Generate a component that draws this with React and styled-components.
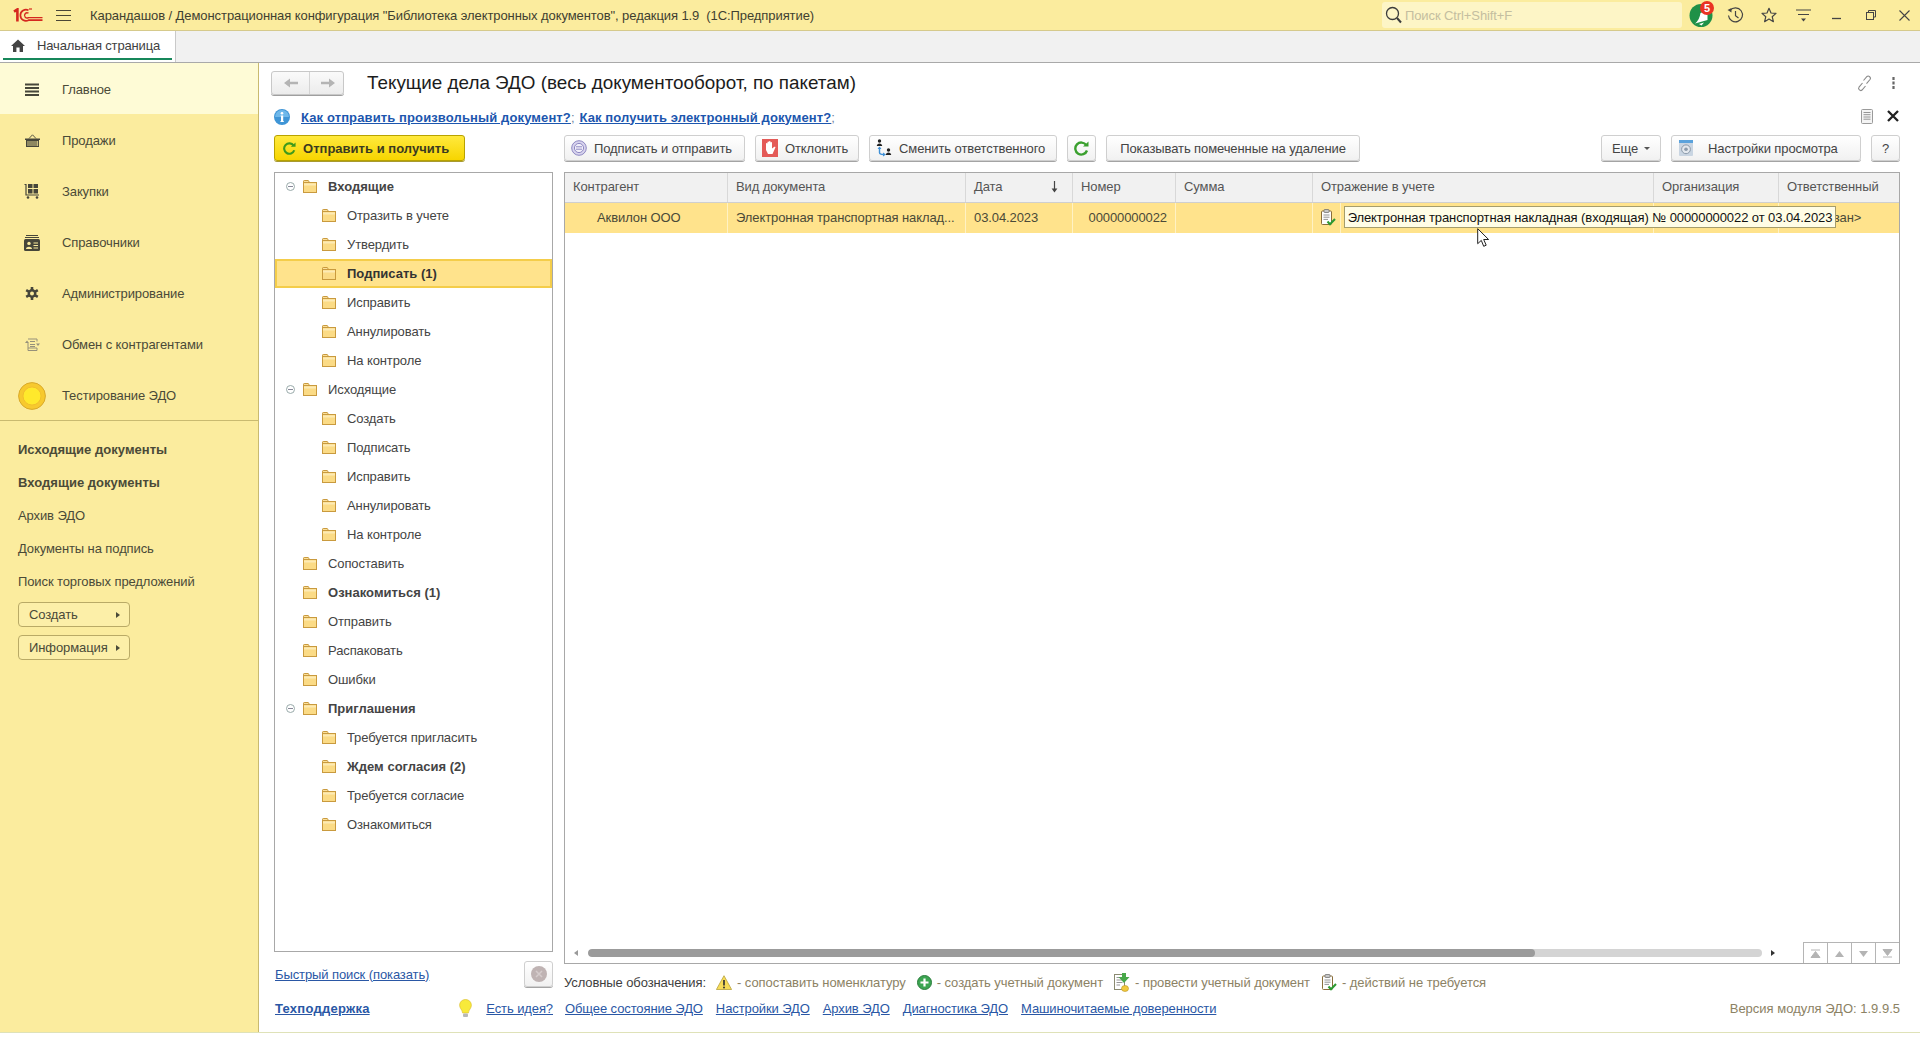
import React from "react";
import styled, { createGlobalStyle, css } from "styled-components";

const Global = createGlobalStyle`
  html, body { margin: 0; padding: 0; background: #fff; }
  body { font-family: "Liberation Sans", Arial, sans-serif; font-size: 13px; letter-spacing: -0.1px; color: #4b4b3c; overflow: hidden; }
  * { box-sizing: border-box; }
`;

const Page = styled.div`width: 1920px; height: 1063px; display: flex; flex-direction: column; background: #fff;`;

/* ---------- title bar ---------- */
const TitleBar = styled.header`
  height: 31px; flex: none; display: flex; align-items: center; background: #fbec9e;
  border-bottom: 1px solid #d6ca8c;
`;
const LogoSlot = styled.div`width: 43px; padding-left: 13px; display: flex; flex: none;`;
const BurgerSlot = styled.div`width: 47px; padding-left: 13px; display: flex; flex: none;`;
const TitleText = styled.div`font-size: 13px; color: #3f3f30; white-space: pre; flex: 1; padding-top: 1px; letter-spacing: -0.08px;`;
const SearchBox = styled.div`
  width: 300px; height: 26px; flex: none; background: #fdf5c6; border-radius: 3px;
  display: flex; align-items: center; gap: 3px; padding-left: 3px; color: #c4bea0; font-size: 13px;
`;
const TitleIcons = styled.div`display: grid; grid-template-columns: 7px 29px 34px 34px 34px 34px 34px 32px; width: 238px; align-items: center; justify-items: center; flex: none;`;
const BellSlot = styled.div`position: relative; grid-column: 2; justify-self: start; width: 24px; height: 24px;`;
const BellBadge = styled.span`
  position: absolute; right: -1px; top: -2px; width: 14px; height: 14px; border-radius: 50%;
  background: #ea3323; color: #fff; font-size: 11px; font-weight: 700; line-height: 14px; text-align: center;
`;

/* ---------- tab bar ---------- */
const TabBar = styled.nav`height: 32px; flex: none; background: #f1f1f1; border-bottom: 1px solid #a9a9a9; display: flex;`;
const HomeTab = styled.div`
  width: 176px; background: #fff; border-right: 1px solid #c9c9c9; padding: 0 3px; display: flex; flex-direction: column;
`;
const TabInner = styled.div`
  height: 29px; display: flex; align-items: center; gap: 12px; padding: 2px 0 0 8px; font-size: 13px; color: #3f3f3f; letter-spacing: -0.15px;
  border-bottom: 2px solid #17875a;
`;

/* ---------- body ---------- */
const Body = styled.div`height: 970px; flex: none; display: flex; border-bottom: 1px solid #dfe2b8;`;
const Sidebar = styled.aside`width: 259px; flex: none; background: #fbec9e; border-right: 1px solid #c9ba70;`;
const NavList = styled.div`border-bottom: 1px solid #c9ba70; height: 358px;`;
const NavItem = styled.div`
  height: 51px; display: flex; align-items: center; font-size: 13px; color: #4a4a38; padding-top: 2px;
  background: ${p => (p.$active ? "#fefbd6" : "transparent")};
`;
const NavIconSlot = styled.div`width: 62px; display: flex; justify-content: center; padding-left: 2px; flex: none;`;
const SectionList = styled.div`padding: 12px 0 0 18px;`;
const SectionLink = styled.div`
  height: 33px; display: flex; align-items: center; font-size: 13px; color: #4a4a38;
  font-weight: ${p => (p.$bold ? 700 : 400)};
  letter-spacing: ${p => (p.$bold ? "0.03px" : "-0.1px")};
`;
const SideButton = styled.div`
  width: 112px; height: 25px; margin-top: ${p => p.$mt}px; border: 1px solid #b9aa66; border-radius: 4px; background: #fcefa8;
  display: flex; align-items: center; justify-content: space-between; padding: 0 9px 0 10px; color: #4a4a38; font-size: 13px;
`;
const Caret = styled.span`
  width: 0; height: 0; border-style: solid; flex: none;
  ${p => p.$dir === "left" && css`border-width: 3px 4px 3px 0; border-color: transparent #9a9a9a transparent transparent;`}
  ${p => p.$dir === "right" && css`border-width: 3px 0 3px 4px; border-color: transparent transparent transparent ${p.$c || "#4a4a38"};`}
  ${p => p.$dir === "down" && css`border-width: 3px 3px 0 3px; border-color: #555 transparent transparent transparent;`}
`;

const Main = styled.main`flex: 1; min-width: 0; padding: 8px 20px 0 12px; display: flex; flex-direction: column;`;
const HeaderRow = styled.div`height: 24px; display: flex; align-items: center; gap: 23px;`;
const NavGroup = styled.div`
  width: 73px; height: 24px; display: grid; grid-template-columns: 37px 36px; flex: none; border: 1px solid #c8c8c8; border-radius: 3px;
  background: linear-gradient(#fafafa, #ececec); box-shadow: 0 1px 0 #9f9f9f;
`;
const NavCell = styled.div`display: flex; align-items: center; justify-content: center; & + & { border-left: 1px solid #d4d4d4; }`;
const PageTitle = styled.h1`margin: 0; font-size: 18.85px; letter-spacing: 0; font-weight: 400; color: #1c1c1c; white-space: nowrap; flex: 1;`;
const RowTools = styled.div`
  display: grid; grid-template-columns: ${p => p.$first}px 26px; justify-items: center; align-items: center; margin-right: -6px; margin-bottom: ${p => p.$mb || 0}px; flex: none;
`;
const InfoRow = styled.div`height: 24px; margin: 10px 0 0 3px; display: flex; align-items: center; font-size: 13px; color: #6b7fa0;`;
const InfoIcon = styled.div`width: 27px; display: flex; flex: none;`;
const HelpLink = styled.a`color: #1c56ae; font-weight: 700; text-decoration: underline; letter-spacing: 0.12px;`;
const Sep = styled.span`margin-right: 5px;`;
const Spacer = styled.div`flex: 1;`;

const Work = styled.div`margin: 6px 0 0 3px; display: grid; grid-template-columns: 279px 1336px; column-gap: 11px;`;
const Col = styled.div`display: flex; flex-direction: column;`;

const btnBase = css`
  height: 26px; flex: none; display: flex; align-items: center; justify-content: center; border: 1px solid #cfcfcf; border-radius: 3px;
  font-size: 13px; color: #444; box-shadow: 0 1px 0 #a4a4a4; background: linear-gradient(#ffffff, #f1f1f1); white-space: nowrap;
`;
const PrimaryButton = styled.div`
  ${btnBase}; width: 191px; gap: 7px; justify-content: flex-start; padding-left: 8px; font-weight: 700; letter-spacing: 0.02px;
  border-color: #b8a200; color: #3a3a20; background: linear-gradient(#ffe93d, #f7d500); box-shadow: 0 1px 0 #a89a30;
`;
const Toolbar = styled.div`display: flex; gap: 10px;`;
const Button = styled.div`
  ${btnBase}; width: ${p => p.$w}px; gap: ${p => p.$gap || 7}px; margin-left: ${p => (p.$push ? "auto" : 0)};
  ${p => p.$left && css`justify-content: flex-start; padding-left: ${p.$pad || 6}px;`}
`;

/* ---------- tree ---------- */
const Tree = styled.div`height: 780px; margin-top: 11px; border: 1px solid #a8a8a8; background: #fff;`;
const TreeRow = styled.div`
  height: 29px; display: flex; align-items: center; font-size: 13px; color: #444; white-space: nowrap;
  font-weight: ${p => (p.$bold ? 700 : 400)};
  letter-spacing: ${p => (p.$bold ? "0.02px" : "-0.1px")};
  padding-left: ${p => (p.$level === 2 ? 47 : 28)}px;
  gap: 11px;
  position: relative;
  &:first-child { height: 28px; padding-bottom: 1px; }
  ${p => p.$sel && css`background: #ffe38c; box-shadow: inset 0 0 0 2px #f4cd4a; color: #333;`}
`;
const Toggle = styled.span`
  position: absolute; left: 11px; top: 50%; margin-top: -5px; width: 9px; height: 9px; border: 1px solid #9aa; border-radius: 50%;
  &::after { content: ""; position: absolute; left: 1px; right: 1px; top: 3px; height: 1px; background: #889; }
`;
const QuickRow = styled.div`height: 26px; margin-top: 9px; display: flex; align-items: center; justify-content: space-between; padding-left: 1px;`;
const PlainLink = styled.a`
  color: #2a57a5; text-decoration: underline; white-space: nowrap; font-size: 13px;
  font-weight: ${p => (p.$bold ? 700 : 400)};
  letter-spacing: ${p => (p.$bold ? "0.25px" : "-0.1px")};
`;
const IconButton = styled.div`${btnBase}; width: 29px;`;
const SupportRow = styled.div`height: 20px; margin-top: 11px; display: flex; align-items: center; padding-left: 1px;`;
const Lamp = styled.div`margin-left: auto; width: 27px; display: flex; flex: none;`;

/* ---------- table ---------- */
const Table = styled.div`height: 792px; margin-top: 11px; border: 1px solid #a8a8a8; display: flex; flex-direction: column; position: relative;`;
const HeadRow = styled.div`
  height: 30px; flex: none; background: #f1f1f1; border-bottom: 1px solid #cfcfcf;
  display: grid; grid-template-columns: 163px 238px 107px 103px 137px 341px 125px 1fr;
`;
const HeadCell = styled.div`
  display: flex; align-items: center; justify-content: space-between; padding: 0 14px 2px 8px; font-size: 13px; color: #555; white-space: nowrap;
  border-right: 1px solid #d8d8d8; &:last-child { border-right: 0; }
`;
const DataRow = styled.div`
  height: 30px; flex: none; background: #ffe38c;
  display: grid; grid-template-columns: 163px 238px 107px 103px 137px 28px 313px 125px 1fr;
`;
const Cell = styled.div`
  display: flex; align-items: center; font-size: 13px; color: #4a4a38; white-space: nowrap; overflow: hidden; min-width: 0;
  padding: 0 8px 2px; border-right: 1px solid #fff2c4;
  justify-content: ${p => p.$align || "flex-start"};
  padding-left: ${p => p.$pl || 8}px;
  &:last-child { border-right: 0; }
`;
const Tooltip = styled.div`
  position: absolute; left: 779px; top: 33px; width: 492px; height: 22px; background: #fffde6; border: 1px solid #a59d6c;
  display: flex; align-items: center; justify-content: center; font-size: 13px; color: #111; white-space: nowrap; letter-spacing: -0.08px;
`;
const Cursor = styled.div`position: absolute; left: 912px; top: 55px; display: flex;`;
const TableFoot = styled.div`margin-top: auto; height: 21px; display: flex; flex: none;`;
const ScrollArea = styled.div`flex: 1; display: flex; align-items: flex-start; padding: 7px 0 0 9px;`;
const ScrollTrack = styled.div`width: 1174px; height: 8px; border-radius: 4px; background: #d4d4d4; margin: 0 9px 0 10px; overflow: hidden; flex: none;`;
const ScrollThumb = styled.div`height: 100%; width: 80.7%; background: #9b9b9b; border-radius: 4px;`;
const ArrowSlot = styled.div`height: 8px; display: flex; align-items: center; flex: none;`;
const PagerCell = styled.div`
  width: 24px; flex: none; border-left: 1px solid #b5b5b5; border-top: 1px solid #b5b5b5; display: flex; align-items: center; justify-content: center;
`;

const Legend = styled.div`height: 20px; margin-top: 8px; display: flex; align-items: center; white-space: nowrap;`;
const LegendLabel = styled.span`color: #3e3e3e; margin-right: 10px; font-size: 13px;`;
const LegendText = styled.span`color: #8c8264; font-size: 13px; margin: 0 11px 0 5px; letter-spacing: -0.06px;`;
const LinksRow = styled.div`height: 20px; margin-top: 6px; display: flex; align-items: center; gap: 13px; padding-left: 1px;`;
const Version = styled.span`margin-left: auto; color: #8c8264; font-size: 13px; letter-spacing: 0;`;

/* ---------- icons ---------- */
const Svg = ({ w, h, vb, children }) => (
  <svg width={w} height={h} viewBox={vb || `0 0 ${w} ${h}`} fill="none" style={{ display: "block", flex: "none" }}>{children}</svg>
);
const Logo = () => (
  <Svg w={30} h={15} vb="0 0 30 15">
    <g stroke="#d5281f" fill="none">
      <path d="M1 3.6 L4.4 1.4 V13.5" strokeWidth="2.6" />
      <path d="M15.5 2.2 A5.6 5.6 0 1 0 15.5 12.2 H29.5" strokeWidth="1.7" />
      <path d="M15.5 5.2 A2.6 2.6 0 1 0 15.5 9.6 H29.5" strokeWidth="1.4" />
      <path d="M16 1 H19" strokeWidth="1.2" />
    </g>
  </Svg>
);
const Burger = () => (
  <Svg w={15} h={13}><path d="M0 1.5H15M0 6.5H15M0 11.5H15" stroke="#4a4636" strokeWidth="1.2" /></Svg>
);
const Home = () => (
  <Svg w={14} h={13} vb="0 0 14 13"><path d="M7 0.5 L14 7 H12 V13 H8.6 V8.6 H5.4 V13 H2 V7 H0 Z" fill="#444" /></Svg>
);
const Search = () => (
  <Svg w={17} h={18}><circle cx="7.5" cy="7.5" r="6" stroke="#3c3c3c" strokeWidth="1.3" /><path d="M12 12 L16 16.5" stroke="#3c3c3c" strokeWidth="2" /></Svg>
);
const Bell = () => (
  <Svg w={24} h={24}>
    <circle cx="12" cy="12.5" r="11.5" fill="#1f9148" />
    <path d="M18.5 7 L18.5 17 L6 20.5 Q10.5 17 11.5 10 Z" fill="#fff" />
    <path d="M10 21 L15 19.5 L12.5 22.5 Z" fill="#fff" />
  </Svg>
);
const History = () => (
  <Svg w={17} h={17}>
    <path d="M3 3.5 A7 7 0 1 1 1.5 8.5" stroke="#444" strokeWidth="1.2" />
    <path d="M0.5 3 L4.5 1 L4.5 5.5 Z" fill="#444" />
    <path d="M8.5 4 V8.7 L11.5 11" stroke="#444" strokeWidth="1.2" />
  </Svg>
);
const Star = () => (
  <Svg w={16} h={16}><path d="M8 1.3 L10 6 L15 6.4 L11.2 9.7 L12.4 14.7 L8 12 L3.6 14.7 L4.8 9.7 L1 6.4 L6 6 Z" stroke="#444" strokeWidth="1.2" strokeLinejoin="round" /></Svg>
);
const FilterLines = () => (
  <Svg w={15} h={13}><path d="M0 1H15M2 5.5H13" stroke="#444" strokeWidth="1.2" /><path d="M5 9.5H10L7.5 12.5Z" fill="#444" /></Svg>
);
const Minimize = () => <Svg w={10} h={10}><path d="M0 8.5H9" stroke="#444" strokeWidth="1.3" /></Svg>;
const Restore = () => (
  <Svg w={10} h={10}><path d="M2.5 2.5V.5H9.5V7H7.5" stroke="#444" /><rect x=".5" y="2.5" width="7" height="7" stroke="#444" /></Svg>
);
const CloseThin = () => <Svg w={11} h={11}><path d="M.5.5L10.5 10.5M10.5.5L.5 10.5" stroke="#444" strokeWidth="1.1" /></Svg>;

const iconC = "#46463a";
const ListIcon = () => <Svg w={14} h={13}><path d="M0 1.5H14M0 5H14M0 8.5H14M0 12H14" stroke={iconC} strokeWidth="1.8" /></Svg>;
const Basket = () => (
  <Svg w={15} h={13}>
    <path d="M4 4.5 L7.5 0.8 L11 4.5" stroke={iconC} strokeWidth=".9" />
    <path d="M0 4.5H15V6H14V13H1V6H0Z" fill={iconC} />
    <path d="M3 7V12M5 7V12M7 7V12M9 7V12M11 7V12M12.6 7V12" stroke="#fbec9e" strokeWidth=".8" />
  </Svg>
);
const Cart = () => (
  <Svg w={16} h={15}>
    <path d="M.5.5H2V11H15" stroke={iconC} strokeWidth="1.2" />
    <rect x="4" y="0" width="4.5" height="4" fill={iconC} /><rect x="9.5" y="0" width="4.5" height="4" fill={iconC} />
    <rect x="4" y="5" width="4.5" height="4.5" fill={iconC} /><rect x="9.5" y="5" width="4.5" height="4.5" fill={iconC} />
    <circle cx="4" cy="13.5" r="1.3" fill={iconC} /><circle cx="13" cy="13.5" r="1.3" fill={iconC} />
  </Svg>
);
const IdCard = () => (
  <Svg w={16} h={16}>
    <path d="M2 0H14V1H2ZM1 2H15V3H1Z" fill={iconC} />
    <rect x="0" y="4" width="16" height="12" rx="1.5" fill={iconC} />
    <circle cx="5" cy="8.4" r="1.7" fill="#fbec9e" /><path d="M2 14C2 11 8 11 8 14Z" fill="#fbec9e" />
    <path d="M9.5 8H14M9.5 10.5H14M9.5 13H14" stroke="#fbec9e" strokeWidth="1" />
  </Svg>
);
const Gear = () => (
  <Svg w={14} h={15} vb="0 0 14 15">
    <path d="M7 1V14M1.2 4.2L12.8 10.8M12.8 4.2L1.2 10.8" stroke={iconC} strokeWidth="2.6" />
    <circle cx="7" cy="7.5" r="4.4" fill={iconC} /><circle cx="7" cy="7.5" r="2" fill="#fbec9e" />
  </Svg>
);
const Exchange = () => (
  <Svg w={15} h={14}>
    <path d="M3 1H12V3.5M3 5V10H12V12.5H3V10M5 3.5H10M5 6.5H10M5 8.5H10" stroke="#96917a" strokeWidth="1" />
    <path d="M0 5H4L2 2.5ZM11 5.5H15L13 8Z" fill="#96917a" />
  </Svg>
);
const Coin = () => (
  <Svg w={28} h={28}><circle cx="14" cy="14" r="13.4" fill="#f7c92e" stroke="#d9a92b" /><circle cx="14" cy="14" r="9" fill="#ffe92c" stroke="#efb92c" strokeWidth=".8" /></Svg>
);
const Arrow = ({ right }) => (
  <Svg w={14} h={10}><path d={right ? "M0 3.7H8V0.5L14 5L8 9.5V6.3H0Z" : "M14 3.7H6V0.5L0 5L6 9.5V6.3H14Z"} fill="#b4b4b4" /></Svg>
);
const LinkIcon = () => (
  <Svg w={15} h={17}>
    <path d="M6.5 5.5L10 1.5C11.5 .2 14.5 2.5 13 4.5L9.5 8.7" stroke="#8a8a8a" strokeWidth="1.1" />
    <path d="M8.5 11L5 15C3.5 16.5 .5 14.3 2 12.2L5.5 8" stroke="#8a8a8a" strokeWidth="1.1" />
  </Svg>
);
const Dots = () => <Svg w={3} h={12}><path d="M1.5 0V3M1.5 4.5V7.5M1.5 9V12" stroke="#666" strokeWidth="2.2" /></Svg>;
const Info = () => (
  <Svg w={16} h={16}>
    <circle cx="8" cy="8" r="8" fill="#3f95d6" />
    <path d="M8 1A7 7 0 0 1 15 8H1A7 7 0 0 1 8 1Z" fill="#6fb8ea" />
    <path d="M6.6 6.5H9.2V12.2H10V13H6.3V12.2H7V7.3H6.6Z" fill="#fff" /><circle cx="8" cy="4.3" r="1.3" fill="#fff" />
  </Svg>
);
const DocSmall = () => (
  <Svg w={12} h={15}><rect x=".5" y=".5" width="11" height="14" rx="1" fill="#f4f4f4" stroke="#9a9a9a" /><path d="M2.5 3.5H9.5M2.5 5.7H9.5M2.5 8H9.5M2.5 10.2H9.5" stroke="#8a8a8a" strokeWidth=".9" /></Svg>
);
const CloseBold = () => <Svg w={12} h={12}><path d="M1 1L11 11M11 1L1 11" stroke="#222" strokeWidth="2.3" /></Svg>;
const Refresh = ({ c = "#3ba02f", s = 13 }) => (
  <Svg w={s} h={s} vb="0 0 15 15">
    <path d="M12.3 4.2A6 6 0 1 0 13 9.5" stroke={c} strokeWidth="2.4" />
    <path d="M9 5.5H14.5V0.5Z" fill={c} />
  </Svg>
);
const SignIcon = () => (
  <Svg w={16} h={16}>
    <circle cx="8" cy="8" r="7.3" fill="#d8d4ee" stroke="#8e88c2" />
    <circle cx="8" cy="8" r="4.6" fill="#f2f0fa" stroke="#8e88c2" />
    <path d="M5 6.8H11M5 9.2H11" stroke="#8e88c2" strokeWidth="1" />
  </Svg>
);
const StopHand = () => (
  <Svg w={16} h={18}>
    <rect width="16" height="18" fill="#e45a57" />
    <path d="M4 8V4.5a.8.8 0 0 1 1.5 0V8V3a.8.8 0 0 1 1.5 0V8V2.6a.8.8 0 0 1 1.5 0V8V3.4a.8.8 0 0 1 1.5 0V9.5L12 8c.8-.8 1.8 0 1.3.8L10.5 15H6L4 11Z" fill="#fff" />
  </Svg>
);
const Assign = () => (
  <Svg w={16} h={18}>
    <circle cx="3.5" cy="2" r="1.7" fill="#222" /><path d="M.8 7C.8 3.5 6.2 3.5 6.2 7Z" fill="#222" />
    <circle cx="12.5" cy="11" r="1.7" fill="#222" /><path d="M9.8 16C9.8 12.5 15.2 12.5 15.2 16Z" fill="#222" />
    <path d="M3.5 8.5V13.5C3.5 15 5 15.5 7.5 15.5" stroke="#3e8fd6" strokeWidth="1.4" />
    <path d="M1.5 10L3.5 7.5L5.5 10ZM7 13.5L10 15.5L7 17.5Z" fill="#3e8fd6" />
  </Svg>
);
const Settings = () => (
  <Svg w={14} h={16}>
    <rect width="14" height="16" rx="1" fill="#c9d5e2" /><rect width="14" height="3" fill="#5aa2dc" />
    <circle cx="7" cy="9.3" r="4.4" fill="#e3e8ee" stroke="#8b9aaa" /><circle cx="7" cy="9.3" r="1.8" fill="#8b9aaa" />
  </Svg>
);
const SortDown = () => <Svg w={7} h={12}><path d="M3.5 0V10" stroke="#444" strokeWidth="1.2" /><path d="M.6 7.5H6.4L3.5 11.5Z" fill="#444" /></Svg>;
const Folder = () => (
  <Svg w={14} h={13}>
    <path d="M.5 2.5V1.2C.5.8.8.5 1.2.5H5.3L6.5 2.5Z" fill="#fbe09a" stroke="#c99a3e" />
    <rect x=".5" y="2.5" width="13" height="10" fill="#fbdb86" stroke="#c99a3e" />
    <path d="M1 3.5H13V5.5H1Z" fill="#fdeab5" />
  </Svg>
);
const ClipCheck = () => (
  <Svg w={16} h={17}>
    <rect x="1.5" y="2" width="10" height="13.5" rx="1" fill="#fdfdfd" stroke="#8a6e3a" />
    <rect x="4" y=".5" width="5" height="3" rx=".7" fill="#c7c7c7" stroke="#666" strokeWidth=".7" />
    <path d="M3.5 6H9.5M3.5 8.2H9.5M3.5 10.4H8" stroke="#888" strokeWidth=".9" />
    <path d="M7.5 12.5L10 15.2L15 10" stroke="#2c9a32" strokeWidth="2.1" />
  </Svg>
);
const Warning = () => (
  <Svg w={16} h={15}>
    <path d="M8 .7L15.6 14.5H.4Z" fill="#f7dc58" stroke="#b7a23c" strokeWidth=".8" strokeLinejoin="round" />
    <path d="M8 5V10.5" stroke="#333" strokeWidth="1.7" /><circle cx="8" cy="12.4" r="1" fill="#333" />
  </Svg>
);
const PlusGreen = () => (
  <Svg w={15} h={15}>
    <circle cx="7.5" cy="7.5" r="7" fill="#3ca552" stroke="#2a7d3c" />
    <path d="M7.5 3.5V11.5M3.5 7.5H11.5" stroke="#fff" strokeWidth="2.2" />
  </Svg>
);
const PostDoc = () => (
  <Svg w={16} h={19}>
    <rect x=".5" y="1.5" width="10" height="15" fill="#fff" stroke="#8a8a70" />
    <path d="M2.5 4.5H8.5M2.5 7H8.5M2.5 9.5H8.5M2.5 12H6" stroke="#8a8a8a" strokeWidth=".9" />
    <path d="M8 0H12V4H15.5L10 10L4.5 4H8Z" fill="#48a84a" />
    <ellipse cx="11" cy="15.5" rx="3.5" ry="3" fill="#f2c93e" stroke="#b99420" strokeWidth=".6" />
  </Svg>
);
const CancelRound = () => (
  <Svg w={16} h={16}><circle cx="8" cy="8" r="8" fill="#bfb3b3" /><path d="M5 5L11 11M11 5L5 11" stroke="#d5cccc" strokeWidth="1.5" /></Svg>
);
const LampIcon = () => (
  <Svg w={13} h={19}>
    <path d="M6.5.5C3 .5.6 3 .6 6.2c0 3 2.6 4.4 3 7.8h5.8c.4-3.4 3-4.8 3-7.8C12.4 3 10 .5 6.5.5Z" fill="#f8ea3a" stroke="#d9bb2a" strokeWidth=".6" />
    <rect x="4" y="14.5" width="5" height="3.5" rx="1" fill="#b8b8b8" />
  </Svg>
);
const CursorIcon = () => (
  <Svg w={13} h={20}>
    <path d="M.7.7V15.7L4.3 12.4L6.7 18.3L9.2 17.2L6.7 11.5H11.6Z" fill="#fff" stroke="#222" strokeWidth="1" strokeLinejoin="round" />
  </Svg>
);
const Pager = ({ kind }) => {
  const c = "#b4b4b4";
  if (kind === "first") return <Svg w={11} h={9}><path d="M1 1H10M1 8.5H10L5.5 2.5Z" stroke={c} fill={c} strokeWidth="1" /></Svg>;
  if (kind === "up") return <Svg w={11} h={9}><path d="M1 8H10L5.5 2Z" fill={c} /></Svg>;
  if (kind === "down") return <Svg w={11} h={9}><path d="M1 2H10L5.5 8Z" fill={c} /></Svg>;
  return <Svg w={11} h={9}><path d="M1 8H10M1 .5H10L5.5 6.5Z" stroke={c} fill={c} strokeWidth="1" /></Svg>;
};

/* ---------- data ---------- */
const NAV = [
  [ListIcon, "Главное", true], [Basket, "Продажи"], [Cart, "Закупки"], [IdCard, "Справочники"],
  [Gear, "Администрирование"], [Exchange, "Обмен с контрагентами"], [Coin, "Тестирование ЭДО"],
];
const SECTION = [["Исходящие документы", true], ["Входящие документы", true], ["Архив ЭДО"], ["Документы на подпись"], ["Поиск торговых предложений"]];
const TREE = [
  { t: "Входящие", l: 1, b: 1, o: 1 }, { t: "Отразить в учете", l: 2 }, { t: "Утвердить", l: 2 }, { t: "Подписать (1)", l: 2, b: 1, s: 1 },
  { t: "Исправить", l: 2 }, { t: "Аннулировать", l: 2 }, { t: "На контроле", l: 2 },
  { t: "Исходящие", l: 1, o: 1 }, { t: "Создать", l: 2 }, { t: "Подписать", l: 2 }, { t: "Исправить", l: 2 }, { t: "Аннулировать", l: 2 }, { t: "На контроле", l: 2 },
  { t: "Сопоставить", l: 1 }, { t: "Ознакомиться (1)", l: 1, b: 1 }, { t: "Отправить", l: 1 }, { t: "Распаковать", l: 1 }, { t: "Ошибки", l: 1 },
  { t: "Приглашения", l: 1, b: 1, o: 1 }, { t: "Требуется пригласить", l: 2 }, { t: "Ждем согласия (2)", l: 2, b: 1 }, { t: "Требуется согласие", l: 2 }, { t: "Ознакомиться", l: 2 },
];
const HEAD = ["Контрагент", "Вид документа", "Дата", "Номер", "Сумма", "Отражение в учете", "Организация", "Ответственный"];
const LINKS = ["Общее состояние ЭДО", "Настройки ЭДО", "Архив ЭДО", "Диагностика ЭДО", "Машиночитаемые доверенности"];

export default function App() {
  return (
    <Page>
      <Global />
      <TitleBar>
        <LogoSlot><Logo /></LogoSlot>
        <BurgerSlot><Burger /></BurgerSlot>
        <TitleText>Карандашов / Демонстрационная конфигурация "Библиотека электронных документов", редакция 1.9  (1С:Предприятие)</TitleText>
        <SearchBox><Search />Поиск Ctrl+Shift+F</SearchBox>
        <TitleIcons>
          <BellSlot><Bell /><BellBadge>5</BellBadge></BellSlot>
          <History /><Star /><FilterLines /><Minimize /><Restore /><CloseThin />
        </TitleIcons>
      </TitleBar>
      <TabBar>
        <HomeTab><TabInner><Home />Начальная страница</TabInner></HomeTab>
      </TabBar>
      <Body>
        <Sidebar>
          <NavList>
            {NAV.map(([I, t, a]) => (
              <NavItem key={t} $active={a}><NavIconSlot><I /></NavIconSlot>{t}</NavItem>
            ))}
          </NavList>
          <SectionList>
            {SECTION.map(([t, b]) => <SectionLink key={t} $bold={b}>{t}</SectionLink>)}
            <SideButton $mt={4}>Создать<Caret $dir="right" /></SideButton>
            <SideButton $mt={8}>Информация<Caret $dir="right" /></SideButton>
          </SectionList>
        </Sidebar>
        <Main>
          <HeaderRow>
            <NavGroup><NavCell><Arrow /></NavCell><NavCell><Arrow right /></NavCell></NavGroup>
            <PageTitle>Текущие дела ЭДО (весь документооборот, по пакетам)</PageTitle>
            <RowTools $first={32}><LinkIcon /><Dots /></RowTools>
          </HeaderRow>
          <InfoRow>
            <InfoIcon><Info /></InfoIcon>
            <HelpLink>Как отправить произвольный документ?</HelpLink><Sep>;</Sep>
            <HelpLink>Как получить электронный документ?</HelpLink>;
            <Spacer />
            <RowTools $first={26} $mb={2}><DocSmall /><CloseBold /></RowTools>
          </InfoRow>
          <Work>
            <Col>
              <PrimaryButton><Refresh c="#3f9a1c" />Отправить и получить</PrimaryButton>
              <Tree>
                {TREE.map((r, i) => (
                  <TreeRow key={i} $level={r.l} $bold={r.b} $sel={r.s}>
                    {r.o ? <Toggle /> : null}
                    <Folder />{r.t}
                  </TreeRow>
                ))}
              </Tree>
              <QuickRow><PlainLink>Быстрый поиск (показать)</PlainLink><IconButton><CancelRound /></IconButton></QuickRow>
              <SupportRow>
                <PlainLink $bold>Техподдержка</PlainLink>
                <Lamp><LampIcon /></Lamp>
                <PlainLink>Есть идея?</PlainLink>
              </SupportRow>
            </Col>
            <Col>
              <Toolbar>
                <Button $w={181} $left><SignIcon />Подписать и отправить</Button>
                <Button $w={104} $left><StopHand />Отклонить</Button>
                <Button $w={188} $left><Assign />Сменить ответственного</Button>
                <Button $w={29}><Refresh s={15} /></Button>
                <Button $w={254}>Показывать помеченные на удаление</Button>
                <Button $w={60} $push $gap={6}>Еще<Caret $dir="down" /></Button>
                <Button $w={190} $gap={15} $left $pad={7}><Settings />Настройки просмотра</Button>
                <Button $w={29}>?</Button>
              </Toolbar>
              <Table>
                <HeadRow>
                  {HEAD.map(h => (
                    <HeadCell key={h}>{h}{h === "Дата" ? <SortDown /> : null}</HeadCell>
                  ))}
                </HeadRow>
                <DataRow>
                  <Cell $pl={32}>Аквилон ООО</Cell>
                  <Cell>Электронная транспортная наклад...</Cell>
                  <Cell>03.04.2023</Cell>
                  <Cell $align="flex-end">00000000022</Cell>
                  <Cell />
                  <Cell $pl={7}><ClipCheck /></Cell>
                  <Cell />
                  <Cell />
                  <Cell>&lt;Не указан&gt;</Cell>
                </DataRow>
                <Tooltip>Электронная транспортная накладная (входящая) № 00000000022 от 03.04.2023</Tooltip>
                <Cursor><CursorIcon /></Cursor>
                <TableFoot>
                  <ScrollArea>
                    <ArrowSlot><Caret $dir="left" /></ArrowSlot>
                    <ScrollTrack><ScrollThumb /></ScrollTrack>
                    <ArrowSlot><Caret $dir="right" $c="#333" /></ArrowSlot>
                  </ScrollArea>
                  <PagerCell><Pager kind="first" /></PagerCell>
                  <PagerCell><Pager kind="up" /></PagerCell>
                  <PagerCell><Pager kind="down" /></PagerCell>
                  <PagerCell><Pager kind="last" /></PagerCell>
                </TableFoot>
              </Table>
              <Legend>
                <LegendLabel>Условные обозначения:</LegendLabel>
                <Warning /><LegendText>- сопоставить номенклатуру</LegendText>
                <PlusGreen /><LegendText>- создать учетный документ</LegendText>
                <PostDoc /><LegendText>- провести учетный документ</LegendText>
                <ClipCheck /><LegendText>- действий не требуется</LegendText>
              </Legend>
              <LinksRow>
                {LINKS.map(l => <PlainLink key={l}>{l}</PlainLink>)}
                <Version>Версия модуля ЭДО: 1.9.9.5</Version>
              </LinksRow>
            </Col>
          </Work>
        </Main>
      </Body>
    </Page>
  );
}
